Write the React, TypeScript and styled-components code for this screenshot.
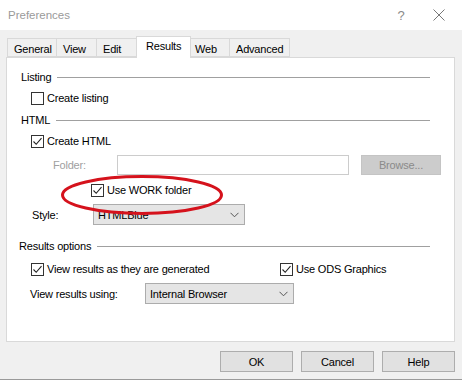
import React from "react";
import styled, { createGlobalStyle } from "styled-components";

const Global = createGlobalStyle`
  html, body { margin: 0; padding: 0; background: #f0f0f0; }
  body { font-family: "Liberation Sans", Arial, sans-serif; font-size: 11px; letter-spacing: -0.2px; color: #000; }
`;

const Window = styled.div`
  width: 462px;
  height: 380px;
  box-sizing: border-box;
  background: #f0f0f0;
  border-bottom: 1px solid #9a9a9a;
  display: flex;
  flex-direction: column;
`;

const TitleBar = styled.div`
  height: 30px;
  background: #fff;
  display: flex;
  align-items: center;
  padding-left: 8px;
`;

const Title = styled.div`
  flex: 1;
  color: #9a9a9a;
  font-size: 11.5px;
  letter-spacing: 0;
  margin-top: -1px;
`;

const TitleButton = styled.div<{ $w: number }>`
  width: ${(p) => p.$w}px;
  height: 30px;
  display: flex;
  align-items: center;
  justify-content: center;
  color: #8a8a8a;
  font-size: 13px;
`;

const TabStrip = styled.div`
  display: flex;
  align-items: flex-end;
  margin-top: 6px;
  padding-left: 7px;
  height: 21px;
`;

const Tab = styled.div<{ $w: number; $sel?: boolean }>`
  width: ${(p) => p.$w}px;
  box-sizing: border-box;
  height: ${(p) => (p.$sel ? 22 : 19)}px;
  margin: ${(p) => (p.$sel ? "0 -2px -1px -2px" : "0")};
  padding-left: ${(p) => (p.$sel ? 9 : 6)}px;
  padding-top: ${(p) => (p.$sel ? 3 : 4)}px;
  border: 1px solid #d9d9d9;
  border-bottom: ${(p) => (p.$sel ? "none" : "1px solid #d9d9d9")};
  border-left: ${(p) => (p.$sel ? "1px solid #d9d9d9" : "none")};
  background: ${(p) => (p.$sel ? "#fff" : "#f0f0f0")};
  position: relative;
  z-index: ${(p) => (p.$sel ? 2 : 0)};
  &:first-child { border-left: 1px solid #d9d9d9; }
`;

const Panel = styled.div`
  position: relative;
  margin: 0 7px 0 6px;
  height: 285px;
  box-sizing: border-box;
  background: #fff;
  border: 1px solid #d9d9d9;
  padding-top: 9px;
  display: flex;
  flex-direction: column;
`;

const GroupHeader = styled.div<{ $mt: number; $pl: number }>`
  display: flex;
  align-items: center;
  height: 20px;
  margin-top: ${(p) => p.$mt}px;
  padding-left: ${(p) => p.$pl}px;
  padding-right: 24px;
`;

const Rule = styled.div`
  flex: 1;
  height: 1px;
  background: #a0a0a0;
  margin-left: 6px;
`;

const Row = styled.div<{ $mt: number; $pl: number; $h?: number }>`
  display: flex;
  align-items: center;
  height: ${(p) => p.$h ?? 20}px;
  margin-top: ${(p) => p.$mt}px;
  padding-left: ${(p) => p.$pl}px;
`;

const Check = styled.label<{ $w?: number }>`
  display: flex;
  align-items: center;
  gap: 3px;
  width: ${(p) => (p.$w ? `${p.$w}px` : "auto")};
`;

const Box = styled.span`
  width: 13px;
  height: 13px;
  box-sizing: border-box;
  border: 1px solid #333;
  background: #fff;
  display: flex;
  align-items: center;
  justify-content: center;
`;

const Label = styled.span<{ $w?: number; $disabled?: boolean }>`
  width: ${(p) => (p.$w ? `${p.$w}px` : "auto")};
  color: ${(p) => (p.$disabled ? "#a0a0a0" : "#000")};
`;

const TextInput = styled.div`
  width: 232px;
  height: 20px;
  box-sizing: border-box;
  border: 1px solid #cccccc;
  background: #fff;
`;

const BrowseButton = styled.div`
  margin-left: 12px;
  width: 80px;
  height: 20px;
  box-sizing: border-box;
  border: 1px solid #c4c4c4;
  background: #cccccc;
  color: #8a8a8a;
  display: flex;
  align-items: center;
  justify-content: center;
`;

const Select = styled.div<{ $w: number }>`
  width: ${(p) => p.$w}px;
  height: 21px;
  box-sizing: border-box;
  border: 1px solid #acacac;
  background: #e5e5e5;
  display: flex;
  align-items: center;
  padding: 0 5px 0 4px;
  justify-content: space-between;
`;

const Ellipse = styled.svg`
  position: absolute;
  left: 54px;
  top: 117px;
  overflow: visible;
`;

const Footer = styled.div`
  display: flex;
  justify-content: flex-end;
  gap: 8px;
  padding-right: 7px;
  margin-top: 9px;
`;

const Button = styled.div`
  width: 73px;
  height: 21px;
  box-sizing: border-box;
  border: 1px solid #adadad;
  background: #e1e1e1;
  display: flex;
  align-items: center;
  justify-content: center;
`;

const CheckMark = () => (
  <svg width="11" height="11" viewBox="0 0 11 11">
    <path d="M1.5 5.5 L4.2 8.3 L9.5 2.2" fill="none" stroke="#222" strokeWidth="1.1" />
  </svg>
);

const Checkbox = ({ checked, label, w }: { checked?: boolean; label: string; w?: number }) => (
  <Check $w={w}>
    <Box>{checked && <CheckMark />}</Box>
    <span>{label}</span>
  </Check>
);

const Chevron = () => (
  <svg width="9" height="6" viewBox="0 0 9 6">
    <path d="M0.5 0.8 L4.5 4.8 L8.5 0.8" fill="none" stroke="#555" strokeWidth="1" />
  </svg>
);

const tabs = [
  { name: "General", w: 50 },
  { name: "View", w: 40 },
  { name: "Edit", w: 41 },
  { name: "Results", w: 55, sel: true },
  { name: "Web", w: 41 },
  { name: "Advanced", w: 60 },
];

export default function App() {
  return (
    <>
      <Global />
      <Window>
        <TitleBar>
          <Title>Preferences</Title>
          <TitleButton $w={30}>?</TitleButton>
          <TitleButton $w={46}>
            <svg width="12" height="12" viewBox="0 0 12 12">
              <path d="M0.5 0.5 L11.5 11.5 M11.5 0.5 L0.5 11.5" stroke="#777" strokeWidth="1" />
            </svg>
          </TitleButton>
        </TitleBar>
        <TabStrip>
          {tabs.map((t) => (
            <Tab key={t.name} $w={t.w} $sel={t.sel}>
              {t.name}
            </Tab>
          ))}
        </TabStrip>
        <Panel>
          <GroupHeader $mt={0} $pl={14}>
            Listing
            <Rule />
          </GroupHeader>
          <Row $mt={1} $pl={24}>
            <Checkbox label="Create listing" />
          </Row>
          <GroupHeader $mt={2} $pl={14}>
            HTML
            <Rule />
          </GroupHeader>
          <Row $mt={1} $pl={24}>
            <Checkbox checked label="Create HTML" />
          </Row>
          <Row $mt={4} $pl={46}>
            <Label $w={64} $disabled>
              Folder:
            </Label>
            <TextInput />
            <BrowseButton>Browse...</BrowseButton>
          </Row>
          <Row $mt={5} $pl={84}>
            <Checkbox checked label="Use WORK folder" />
          </Row>
          <Row $mt={4} $pl={25} $h={21}>
            <Label $w={61}>Style:</Label>
            <Select $w={152}>
              <span>HTMLBlue</span>
              <Chevron />
            </Select>
          </Row>
          <GroupHeader $mt={11} $pl={12}>
            Results options
            <Rule />
          </GroupHeader>
          <Row $mt={3} $pl={24}>
            <Checkbox checked label="View results as they are generated" w={249} />
            <Checkbox checked label="Use ODS Graphics" />
          </Row>
          <Row $mt={4} $pl={23} $h={21}>
            <Label $w={115}>View results using:</Label>
            <Select $w={149}>
              <span>Internal Browser</span>
              <Chevron />
            </Select>
          </Row>
          <Ellipse width="162" height="40" viewBox="0 0 162 40">
            <ellipse cx="81" cy="20" rx="79.5" ry="18.5" fill="none" stroke="#d5121c" strokeWidth="3" />
          </Ellipse>
        </Panel>
        <Footer>
          <Button>OK</Button>
          <Button>Cancel</Button>
          <Button>Help</Button>
        </Footer>
      </Window>
    </>
  );
}
